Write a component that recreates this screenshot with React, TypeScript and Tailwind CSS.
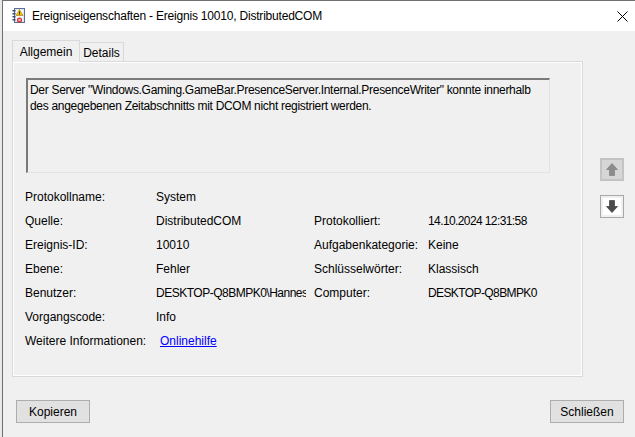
import type { ReactElement, ReactNode } from 'react'

const font = { fontFamily: '"Liberation Sans", Arial, sans-serif' }

interface FieldRow {
  label: string
  value: ReactNode
  label2?: string
  value2?: string
  tight?: boolean
}

const rows: FieldRow[] = [
  { label: 'Protokollname:', value: 'System' },
  {
    label: 'Quelle:',
    value: 'DistributedCOM',
    label2: 'Protokolliert:',
    value2: '14.10.2024 12:31:58',
    tight: true,
  },
  {
    label: 'Ereignis-ID:',
    value: '10010',
    label2: 'Aufgabenkategorie:',
    value2: 'Keine',
  },
  {
    label: 'Ebene:',
    value: 'Fehler',
    label2: 'Schlüsselwörter:',
    value2: 'Klassisch',
  },
  {
    label: 'Benutzer:',
    value: <span className="tracking-[-0.5px]">DESKTOP-Q8BMPK0\Hannes</span>,
    label2: 'Computer:',
    value2: 'DESKTOP-Q8BMPK0',
    tight: true,
  },
  { label: 'Vorgangscode:', value: 'Info' },
  {
    label: 'Weitere Informationen:',
    value: (
      <span className="ml-[4px] text-[#0000ff] underline">Onlinehilfe</span>
    ),
  },
]

function EventIcon(): ReactElement {
  return (
    <svg width="14" height="16" viewBox="0 0 14 16">
      <rect x="2.5" y="0.5" width="10" height="14" fill="#dfe6f2" stroke="#5a6f96" />
      <rect x="4" y="2" width="7" height="11" fill="#f7f9fc" />
      {[2, 5, 8, 11].map((y) => (
        <rect key={y} x="0.5" y={y} width="3" height="1.5" fill="#3b4a6b" />
      ))}
      <path d="M7.5 1.5 L11 7.5 L4 7.5 Z" fill="#f5c400" stroke="#9a7a00" strokeWidth="0.6" />
      <rect x="7.1" y="3.5" width="0.8" height="2.2" fill="#000" />
      <rect x="7.1" y="6.2" width="0.8" height="0.8" fill="#000" />
      <circle cx="7.5" cy="12" r="2.6" fill="#d32f2f" />
      <path d="M6.3 10.8 L8.7 13.2 M8.7 10.8 L6.3 13.2" stroke="#fff" strokeWidth="0.9" />
    </svg>
  )
}

function ArrowButton({ up }: { up: boolean }): ReactElement {
  const fill = up ? '#8c8c8c' : '#4a4a4a'
  return (
    <div
      className={
        up
          ? 'flex h-[23px] w-[24px] items-center justify-center border-2 border-[#c4c4c4] bg-[#d6d6d6]'
          : 'flex h-[23px] w-[24px] items-center justify-center border border-[#a8a8a8] bg-[#f0f0f0] p-[2px]'
      }
    >
      <div
        className={
          up
            ? 'flex h-full w-full items-center justify-center'
            : 'flex h-full w-full items-center justify-center bg-white'
        }
      >
        <svg width="12" height="13" viewBox="0 0 12 13">
          <path
            d={up ? 'M6 0.5 L11.5 6.5 L8.5 6.5 L8.5 12.5 L3.5 12.5 L3.5 6.5 L0.5 6.5 Z' : 'M6 12.5 L11.5 6.5 L8.5 6.5 L8.5 0.5 L3.5 0.5 L3.5 6.5 L0.5 6.5 Z'}
            fill={fill}
            stroke={up ? '#7a7a7a' : '#2e2e2e'}
            strokeWidth="0.6"
          />
        </svg>
      </div>
    </div>
  )
}

function DialogButton({ children }: { children: ReactNode }): ReactElement {
  return (
    <div className="flex h-[23px] w-[74px] items-center justify-center border border-[#adadad] bg-[#e1e1e1] text-[12px] text-black">
      {children}
    </div>
  )
}

export default function App(): ReactElement {
  return (
    <div
      className="flex h-[437px] w-[635px] overflow-hidden bg-[#f0f0f0] text-black"
      style={font}
    >
      <div className="w-[2px] shrink-0 bg-[#e8e8e8]" />
      <div className="flex min-w-0 flex-1 flex-col border-l border-t border-[#6f6f6f]">
        {/* title bar */}
        <div className="flex h-[30px] shrink-0 items-center bg-white pl-[9px] pr-[7px]">
          <EventIcon />
          <span className="ml-[6px] text-[12px] leading-none tracking-[-0.2px] text-black">
            Ereigniseigenschaften - Ereignis 10010, DistributedCOM
          </span>
          <svg className="ml-auto" width="11" height="11" viewBox="0 0 11 11">
            <path d="M0.5 0.5 L10.5 10.5 M10.5 0.5 L0.5 10.5" stroke="#000" strokeWidth="1" />
          </svg>
        </div>

        {/* client area */}
        <div className="flex flex-1 flex-col pl-[9px] pt-[9px]">
          <div className="flex">
            <div className="flex w-[571px] flex-col">
              <div className="relative z-10 flex h-[22px] items-end">
                <div className="flex h-[22px] w-[68px] items-center justify-center border border-b-0 border-[#d9d9d9] bg-[#f0f0f0] text-[12px]">
                  Allgemein
                </div>
                <div className="mb-px flex h-[19px] w-[44px] items-center justify-center border border-b-0 border-l-0 border-[#d9d9d9] bg-[#f0f0f0] pt-[2px] text-[12px]">
                  Details
                </div>
              </div>
              <div className="-mt-px h-[316px] border border-[#d9d9d9]">
                <div className="h-full border border-white pl-[12px] pr-[31px] pt-[15px]">
                  {/* description text box */}
                  <div className="h-[95px] overflow-hidden whitespace-nowrap border-l-2 border-t-2 border-b border-r border-l-[#7a7a7a] border-t-[#7a7a7a] border-b-[#e3e3e3] border-r-[#e3e3e3] px-[2px] pt-[2px] text-[12px] leading-[16px] tracking-[-0.3px]">
                    Der Server "Windows.Gaming.GameBar.PresenceServer.Internal.PresenceWriter" konnte innerhalb
                    <br />
                    des angegebenen Zeitabschnitts mit DCOM nicht registriert werden.
                  </div>

                  {/* properties */}
                  <div className="mt-[12px] -ml-px grid grid-cols-[131px_150px_8px_114px_1fr] text-[12px]">
                    {rows.map((row) => (
                      <div key={row.label} className="contents">
                        <div className="flex h-[24px] items-center">{row.label}</div>
                        <div className="flex h-[24px] items-center overflow-hidden whitespace-nowrap">
                          {row.value}
                        </div>
                        <div />
                        <div className="flex h-[24px] items-center">{row.label2 ?? ''}</div>
                        <div
                          className={
                            row.tight
                              ? 'flex h-[24px] items-center whitespace-nowrap tracking-[-0.6px]'
                              : 'flex h-[24px] items-center whitespace-nowrap'
                          }
                        >
                          {row.value2 ?? ''}
                        </div>
                      </div>
                    ))}
                  </div>
                </div>
              </div>
            </div>

            {/* navigation arrows */}
            <div className="ml-[17px] mt-[118px] flex flex-col gap-[14px]">
              <ArrowButton up />
              <ArrowButton up={false} />
            </div>
          </div>

          <div className="mt-[23px] flex pl-[4px] pr-[11px]">
            <DialogButton>Kopieren</DialogButton>
            <div className="ml-auto">
              <DialogButton>Schließen</DialogButton>
            </div>
          </div>
        </div>
      </div>
    </div>
  )
}
